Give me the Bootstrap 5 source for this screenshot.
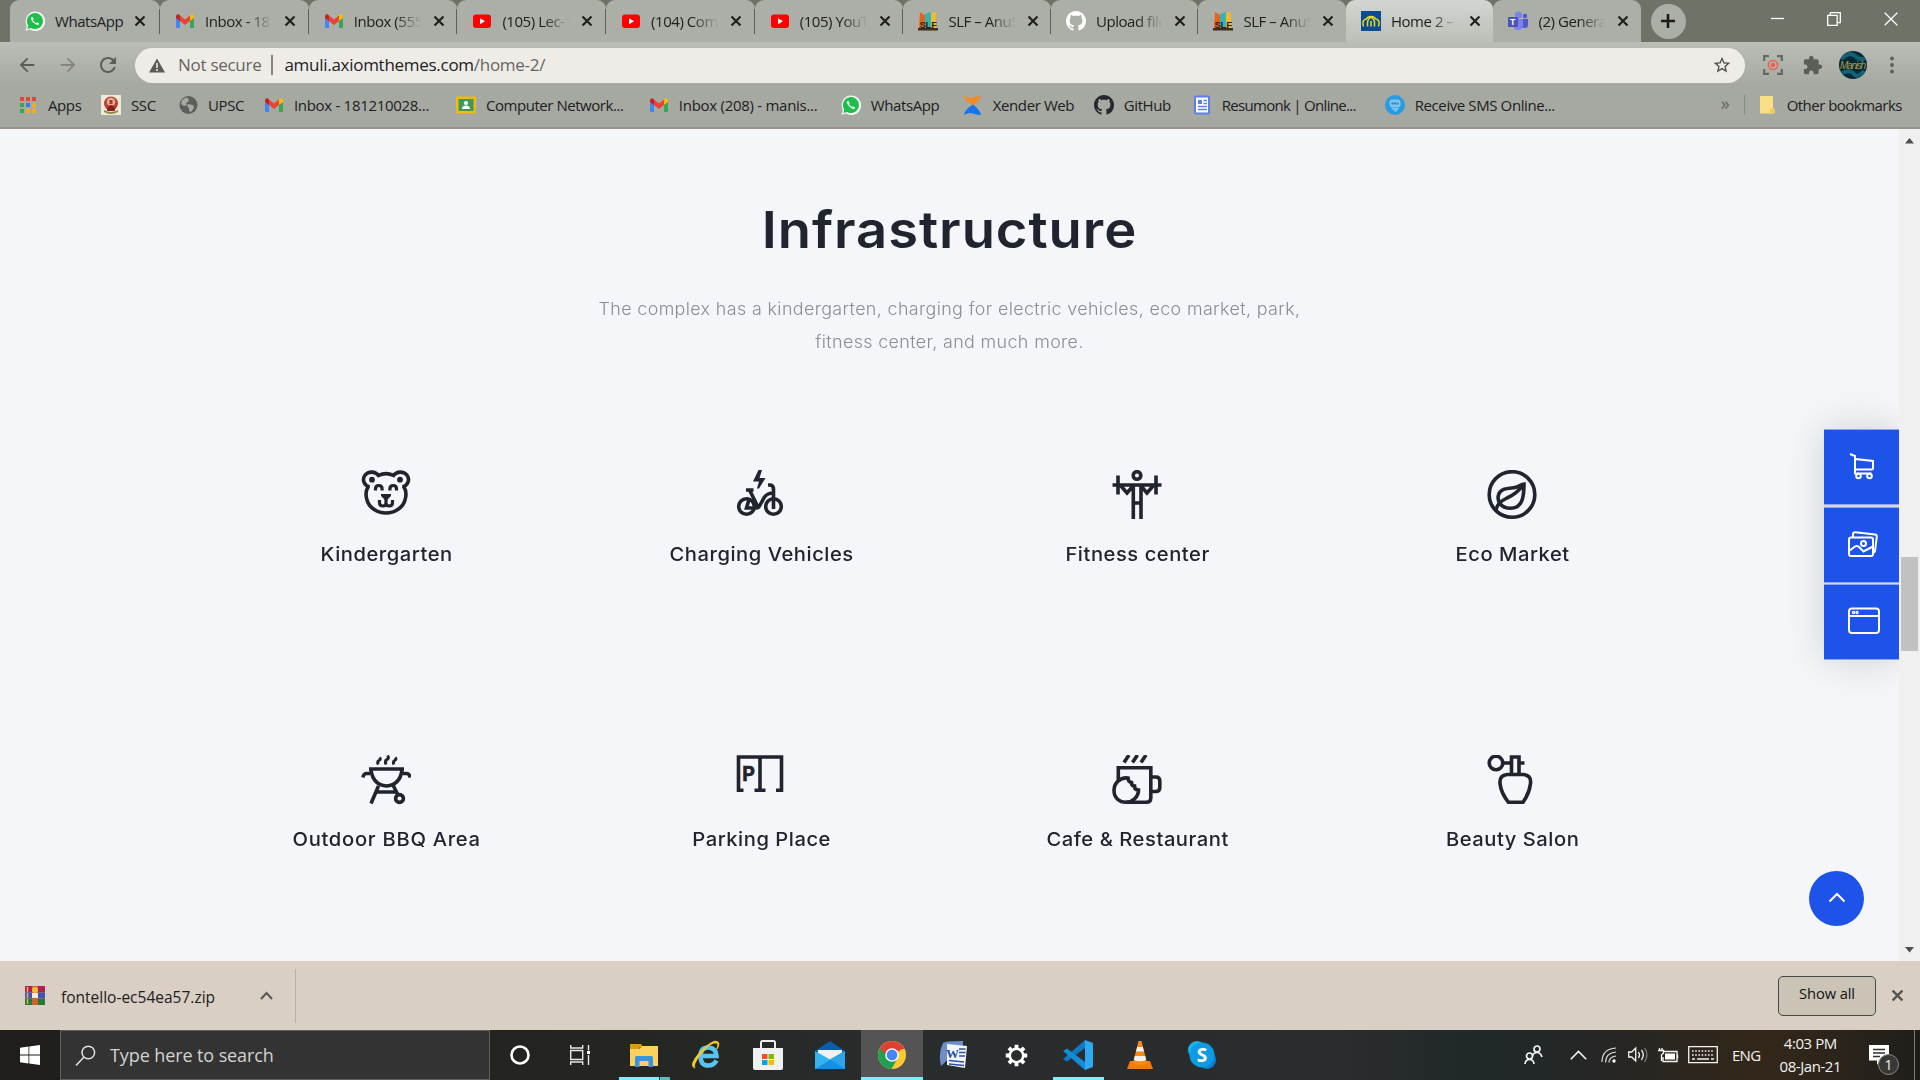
<!DOCTYPE html>
<html lang="en">
<head>
<meta charset="utf-8">
<meta name="viewport" content="width=device-width, initial-scale=1">
<title>Home 2 – Amuli</title>
<link href="https://cdn.jsdelivr.net/npm/bootstrap@5.3.0/dist/css/bootstrap.min.css" rel="stylesheet">
<style>
  html, body { height: 100%; overflow: hidden; }
  body { width: 1920px; height: 1080px; font-family: "Open Sans", "Noto Sans", sans-serif; color: #20211f; background: #f5f6fa; }
  svg { display: block; flex: none; }
  .nowrap { white-space: nowrap; }

  /* tab strip */
  .tabstrip { height: 42px; background: #6e7367; padding-left: 10px; }
  .tab-item { width: 148.7px; height: 42px; padding: 0 12px 0 15px; background: #acaea8; border-radius: 9px 9px 0 0; position: relative; font-size: 15px; letter-spacing: -.45px; }
  .tab-item:first-child { width: 150px; }
  .tab-item:nth-child(n+7) { width: 147.5px; }
  .tab-item + .tab-item::before { content: ""; position: absolute; left: -1px; top: 9px; width: 1px; height: 25px; background: #5c6057; }
  .tab-item.current { background: linear-gradient(#d3d6d1, #bcbfb8); z-index: 1; }
  .tab-item.current::before, .tab-item.current + .tab-item::before { display: none; }
  .tab-name { width: 69px; margin-left: 10px; overflow: hidden; white-space: nowrap; }
  .tab-name.faded { -webkit-mask-image: linear-gradient(90deg, #000 60%, transparent 98%); mask-image: linear-gradient(90deg, #000 60%, transparent 98%); }
  .tab-x { margin-left: 10px; }
  .new-tab { width: 35px; height: 35px; margin-left: 10px; background: #acaea8; border-radius: 50%; }
  .win-btns { margin-left: auto; padding-right: 22px; gap: 43px; }

  /* toolbar */
  .toolbar { height: 43px; background: linear-gradient(#bbbeb7, #a6a8a2); padding: 3px 0 0 16px; }
  .omnibox { height: 35px; width: 1610px; border-radius: 18px; background: #efece8; padding: 0 13px 0 14px; font-size: 17px; letter-spacing: -.28px; }
  .omnibox .sep { width: 2px; height: 20px; background: #85837f; margin: 0 11px 0 10px; }
  .muted { color: #65655f; }
  .avatar { width: 28px; height: 28px; border-radius: 50%; }

  /* bookmarks */
  .bookmarks { height: 44px; background: #a6a8a2; border-bottom: 2px solid #9b918b; padding: 0 18px 2px 18px; font-size: 15px; letter-spacing: -.4px; }
  .bm { gap: 10px; white-space: nowrap; }
  .bm:nth-child(1) { width: 83px } .bm:nth-child(2) { width: 77px } .bm:nth-child(3) { width: 86px }
  .bm:nth-child(4) { width: 192px; letter-spacing: -.3px } .bm:nth-child(5) { width: 193px; letter-spacing: -.45px } .bm:nth-child(6) { width: 192px; letter-spacing: -.28px }
  .bm:nth-child(7) { width: 122px } .bm:nth-child(8) { width: 131px } .bm:nth-child(9) { width: 98px }
  .bm:nth-child(10) { width: 193px; letter-spacing: -.7px } .bm:nth-child(11) { width: 336px }

  /* page */
  .viewport { height: 832px; background: #f5f6fa; }
  .page-area { width: 1899px; position: relative; font-family: Inter, "Open Sans", sans-serif; color: #20242e; overflow: hidden; }
  .page-title { font-size: 51px; font-weight: 600; line-height: 60px; padding-top: 71px; margin: 0; letter-spacing: .9px; transform: scaleX(1.065); }
  .intro { font-size: 17px; line-height: 33px; color: #8a8d97; font-weight: 300; margin: 33px 0 0; letter-spacing: .35px; transform: scaleX(1.052); }
  .features { width: 1501px; margin: 111px auto 0; }
  .feature { height: 285px; }
  .feature svg { margin: 0 auto 21px; fill: none; stroke: #20242e; stroke-width: 3.6; position: relative; left: -.5px; }
  .feature h6 { font-size: 19px; line-height: 27px; font-weight: 500; margin: 0; letter-spacing: .5px; transform: scaleX(1.062); }
  .side-tools { position: absolute; right: 0; top: 300px; width: 75px; box-shadow: 0 0 40px rgba(0,0,0,.16); background: #d3d8e8; }
  .side-tools a { height: 76px; background: #1e53ea; border-top: 1px solid #8fa6ee; border-bottom: 1px solid #8fa6ee; }
  .side-tools a + a { margin-top: 1.5px; }
  .side-tools svg, .to-top svg { fill: none; stroke: #fff; stroke-width: 2; margin-top: -2px; }
  .to-top { position: absolute; left: 1809px; top: 742px; width: 55px; height: 55px; border-radius: 50%; background: #1e53ea; }
  .scrollbar-v { width: 21px; background: #f0f0f0; padding: 9px 2px 8px; }
  .thumb { width: 17px; height: 94px; background: #c1c1c1; margin-top: 413px; }

  /* downloads */
  .downloads { height: 69px; background: #dacfc5; padding: 0 16px 0 25px; font-size: 15.5px; }
  .dl-item { width: 271px; height: 54px; border-right: 1px solid #b9afa6; }
  .show-all { width: 98px; height: 40px; border: 1px solid #45484a; border-radius: 5px; background: #ccc3b7; font-size: 14.7px; color: #111; letter-spacing: -.1px; }

  /* taskbar */
  .taskbar { height: 50px; background: linear-gradient(90deg, #1f1e1b 0, #242521 31%, #292c2c 46%, #2a2c2d 70%, #20282a 77%, #262624 84%, #332719 92%, #2a241c 96%, #201d19); color: #f2f2f2; }
  .search { width: 430px; margin-right: -1px; border: 1px solid #5f5f5f; background: #333; color: #d2d2d2; font-size: 18px; letter-spacing: -.1px; padding-left: 14px; }
  .task { width: 62px; height: 50px; position: relative; }
  .task.open::after { content: ""; position: absolute; left: 6px; right: 5px; bottom: 0; height: 3px; background: #76f3fa; }
  .task.stacked::after { background: linear-gradient(90deg, #76f3fa 40px, #2c4444 40px, #2c4444 41px, #5fb9bd 41px); }
  .task.focus-app { background: #545454; }
  .task.focus-app::after { left: 0; right: 0; }
  .clock { font-size: 15px; line-height: 23px; width: 80px; letter-spacing: -.45px; }
  .notice { position: relative; }
  .notice b { position: absolute; left: 9px; top: 9px; width: 21px; height: 21px; border: 1px solid #8b8b8b; border-radius: 50%; background: #3a3835; font-weight: 400; font-size: 14px; line-height: 19px; text-align: center; }
</style>
<script src="https://cdn.jsdelivr.net/npm/bootstrap@5.3.0/dist/js/bootstrap.bundle.min.js"></script>
</head>
<body class="d-flex flex-column">

<svg width="0" height="0" class="position-absolute">
  <symbol id="wa" viewBox="0 0 20 20"><path d="M.4 19.8 1.8 15A9.8 9.8 0 1 1 5.2 18.600z" fill="#f4f4f2"/><path d="M2.300 18 3.300 14.500A8 8 0 1 1 6 17z" fill="#1dbf4b"/><path transform="translate(5.200 5.200) scale(.6)" fill="#fff" d="M3.654 1.328a.678.678 0 0 0-1.015-.063L1.605 2.300c-.483.484-.661 1.169-.45 1.770a17.568 17.568 0 0 0 4.168 6.608 17.569 17.569 0 0 0 6.608 4.168c.601.211 1.286.033 1.770-.45l1.034-1.034a.678.678 0 0 0-.063-1.015l-2.307-1.794a.678.678 0 0 0-.58-.122l-2.190.547a1.745 1.745 0 0 1-1.657-.459L5.482 8.062a1.745 1.745 0 0 1-.46-1.657l.548-2.190a.678.678 0 0 0-.122-.58z"/></symbol>
  <symbol id="gm" viewBox="0 0 20 20"><path d="M1 5v11q0 1 1 1h3V8z" fill="#4285f4"/><path d="M19 5v11q0 1-1 1h-3V8z" fill="#34a853"/><path d="M5 4.500 10 8.500 15 4.500V10l-5 4-5-4z" fill="#ea4335"/><path d="M1 6c0-3 2.500-3.500 4-1.500V10L1 7z" fill="#c5221f"/><path d="M19 6c0-3-2.500-3.500-4-1.500V10l4-3z" fill="#fbbc04"/></symbol>
  <symbol id="yt" viewBox="0 0 20 20"><rect x="1" y="3.500" width="18" height="13.500" rx="3" fill="#f00"/><path d="M8 7.300v6l5-3z" fill="#fff"/></symbol>
  <symbol id="slf" viewBox="0 0 20 20"><path d="M2 1l5 3v13H1z" fill="#e8641b"/><path d="M7 3l6-2v16H7z" fill="#35b3b6"/><path d="M13 2l5-1v16h-5z" fill="#f1b92c"/><path d="M0 17h20v2.500H0z" fill="#3c2c22"/><text x="1.500" y="17" font-family="Liberation Sans" font-weight="700" font-size="9.500" textLength="17" fill="#2b2118">SLF</text></symbol>
  <symbol id="gh" viewBox="0 0 16 16"><path d="M8 0C3.580 0 0 3.580 0 8c0 3.540 2.290 6.530 5.470 7.590.4.070.55-.17.55-.38 0-.19-.01-.82-.01-1.490-2.010.37-2.530-.49-2.690-.94-.09-.23-.48-.94-.82-1.130-.28-.15-.68-.52-.01-.53.63-.01 1.080.58 1.230.82.72 1.210 1.870.87 2.330.66.070-.52.28-.87.51-1.070-1.780-.2-3.640-.89-3.640-3.950 0-.87.31-1.590.82-2.150-.08-.2-.36-1.020.08-2.120 0 0 .67-.21 2.200.82.64-.18 1.320-.27 2-.27s1.360.09 2 .27c1.530-1.040 2.200-.82 2.200-.82.44 1.100.16 1.920.08 2.120.51.56.82 1.270.82 2.150 0 3.070-1.870 3.750-3.650 3.950.29.25.54.73.54 1.480 0 1.070-.01 1.930-.01 2.200 0 .21.15.46.55.38A8.010 8.010 0 0 0 16 8c0-4.420-3.580-8-8-8z"/></symbol>
  <symbol id="cross" viewBox="0 0 12 12"><path d="M1.500 1.500l9 9m0-9l-9 9" stroke="currentColor" stroke-width="2.200" fill="none"/></symbol>
  <symbol id="arrow" viewBox="0 0 24 24"><path d="M20 11H7.830l5.590-5.590L12 4l-8 8 8 8 1.410-1.410L7.830 13H20v-2z"/></symbol>
</svg>

<!-- browser tabs -->
<div class="tabstrip d-flex align-items-center">
  <div class="tab-item d-flex align-items-center"><svg width="20" height="20"><use href="#wa"/></svg><span class="tab-name">WhatsApp</span><svg class="tab-x" width="12" height="12"><use href="#cross"/></svg></div>
  <div class="tab-item d-flex align-items-center"><svg width="20" height="20"><use href="#gm"/></svg><span class="tab-name faded">Inbox - 18</span><svg class="tab-x" width="12" height="12"><use href="#cross"/></svg></div>
  <div class="tab-item d-flex align-items-center"><svg width="20" height="20"><use href="#gm"/></svg><span class="tab-name faded">Inbox (555</span><svg class="tab-x" width="12" height="12"><use href="#cross"/></svg></div>
  <div class="tab-item d-flex align-items-center"><svg width="20" height="20"><use href="#yt"/></svg><span class="tab-name faded">(105) Lec-1</span><svg class="tab-x" width="12" height="12"><use href="#cross"/></svg></div>
  <div class="tab-item d-flex align-items-center"><svg width="20" height="20"><use href="#yt"/></svg><span class="tab-name faded">(104) Com</span><svg class="tab-x" width="12" height="12"><use href="#cross"/></svg></div>
  <div class="tab-item d-flex align-items-center"><svg width="20" height="20"><use href="#yt"/></svg><span class="tab-name faded">(105) YouT</span><svg class="tab-x" width="12" height="12"><use href="#cross"/></svg></div>
  <div class="tab-item d-flex align-items-center"><svg width="20" height="20"><use href="#slf"/></svg><span class="tab-name faded">SLF – AnuS</span><svg class="tab-x" width="12" height="12"><use href="#cross"/></svg></div>
  <div class="tab-item d-flex align-items-center"><svg width="20" height="20" fill="#fff"><use href="#gh"/></svg><span class="tab-name faded">Upload file</span><svg class="tab-x" width="12" height="12"><use href="#cross"/></svg></div>
  <div class="tab-item d-flex align-items-center"><svg width="20" height="20"><use href="#slf"/></svg><span class="tab-name faded">SLF – AnuS</span><svg class="tab-x" width="12" height="12"><use href="#cross"/></svg></div>
  <div class="tab-item current d-flex align-items-center"><svg width="20" height="20" viewBox="0 0 20 20"><path d="M0 0h20v20H0z" fill="#0c4a92"/><path d="M2.500 15.500q-1-2-.5-4.500 1-3 3.500-3 1-2.500 4.500-2.500T14.500 8q2.500 0 3.500 3 .5 2.500-.5 4.500M6.500 15.500v-4q0-3 3.500-5.500 3.500 2.500 3.500 5.500v4M10 15.500V10" fill="none" stroke="#e8dc20" stroke-width="1.500"/></svg><span class="tab-name faded">Home 2 –</span><svg class="tab-x" width="12" height="12"><use href="#cross"/></svg></div>
  <div class="tab-item d-flex align-items-center"><svg width="20" height="20" viewBox="0 0 20 20"><circle cx="10.500" cy="4" r="3.500" fill="#7b83eb"/><circle cx="17" cy="5" r="2.200" fill="#5059c9"/><path d="M14 8h6v6q0 3-3 3t-3-2z" fill="#5059c9"/><path d="M5 8h10v6q0 5-5 5t-5-5z" fill="#7b83eb"/><rect y="6" width="10" height="10" rx="1" fill="#4b53bc"/><text x="2" y="14.300" font-size="9" font-weight="700" font-family="Liberation Sans" fill="#fff">T</text></svg><span class="tab-name faded">(2) Genera</span><svg class="tab-x" width="12" height="12"><use href="#cross"/></svg></div>
  <div class="new-tab d-flex align-items-center justify-content-center"><svg width="16" height="16" viewBox="0 0 16 16"><path d="M8 1v14M1 8h14" stroke="#1c1d1b" stroke-width="2.600"/></svg></div>
  <div class="win-btns d-flex align-items-center pb-1">
    <svg width="13" height="14" viewBox="0 0 13 14"><path d="M0 6.500h13" stroke="#fff" stroke-width="1.300"/></svg>
    <svg width="14" height="14" viewBox="0 0 14 14" fill="none" stroke="#fff" stroke-width="1.300"><path d="M.7 3.300h9.500v10H.7zM3.300 3V.7h10v10h-3"/></svg>
    <svg width="14" height="14" viewBox="0 0 14 14"><path d="M.7.7l12.600 12.600m0-12.600L.7 13.300" stroke="#fff" stroke-width="1.300"/></svg>
  </div>
</div>

<!-- address bar -->
<div class="toolbar d-flex align-items-center">
  <svg width="22" height="22" fill="#5b5d59"><use href="#arrow"/></svg>
  <svg width="22" height="22" fill="#84867f" style="transform:scaleX(-1);margin-left:19px"><use href="#arrow"/></svg>
  <svg style="margin-left:17px" width="24" height="24" viewBox="0 0 24 24" fill="#5b5d59"><path d="M17.650 6.350C16.200 4.900 14.210 4 12 4c-4.420 0-7.990 3.580-7.990 8s3.570 8 7.990 8c3.730 0 6.840-2.550 7.730-6h-2.080c-.82 2.330-3.040 4-5.650 4-3.310 0-6-2.690-6-6s2.690-6 6-6c1.660 0 3.140.69 4.220 1.780L13 11h7V4l-2.350 2.350z"/></svg>
  <div class="omnibox d-flex align-items-center ms-auto">
    <svg width="16" height="15" viewBox="0 0 16 15"><path d="M8 .5 16 14.500H0z" fill="#5b5b57"/><path d="M8 5v5m0 1v2" stroke="#efece8" stroke-width="1.600"/></svg>
    <span class="muted nowrap" style="margin-left:13px">Not secure</span>
    <span class="sep"></span>
    <span class="nowrap">amuli.axiomthemes.com<span class="muted">/home-2/</span></span>
    <svg class="ms-auto" width="20" height="20" viewBox="0 0 24 24" fill="#4f504d"><path d="M22 9.240l-7.190-.62L12 2 9.190 8.630 2 9.240l5.460 4.730L5.820 21 12 17.270 18.180 21l-1.630-7.030L22 9.240zM12 15.400l-3.760 2.270 1-4.280-3.320-2.880 4.380-.38L12 6.100l1.710 4.040 4.380.38-3.320 2.880 1 4.280L12 15.400z"/></svg>
  </div>
  <div class="d-flex align-items-center" style="width:175px;padding-left:18px">
    <svg width="20" height="20" viewBox="0 0 20 20" fill="none"><path d="M1.200 6V1.200H6m8 0h4.800V6m0 8v4.800H14m-8 0H1.200V14" stroke="#656763" stroke-width="2.200"/><circle cx="10" cy="10" r="4.600" stroke="#ef5f50" stroke-width="1.500"/><circle cx="10" cy="10" r="2.300" fill="#ef5f50"/></svg>
    <svg style="margin-left:20px" width="20" height="20" viewBox="1 0 23 23" fill="#5b5d59"><path d="M20.500 11H19V7c0-1.100-.9-2-2-2h-4V3.500C13 2.120 11.880 1 10.500 1S8 2.120 8 3.500V5H4c-1.100 0-1.990.9-1.990 2v3.800H3.500c1.490 0 2.700 1.210 2.700 2.700s-1.210 2.700-2.700 2.700H2V20c0 1.100.9 2 2 2h3.800v-1.500c0-1.490 1.210-2.700 2.700-2.700 1.490 0 2.700 1.210 2.700 2.700V22H17c1.100 0 2-.9 2-2v-4h1.500c1.380 0 2.500-1.120 2.500-2.500S21.880 11 20.500 11z"/></svg>
    <svg class="avatar" style="margin-left:16px" viewBox="0 0 28 28"><path d="M0 0h28v28H0z" fill="#052a35"/><path d="M2 8q8-8 14-3t10 2M3 22q8-4 12 1t10-3" stroke="#126272" stroke-width="4" fill="none"/><text x="1" y="17.500" font-size="10" font-style="italic" textLength="26" font-family="Liberation Sans" fill="#a99a4e">Manish</text></svg>
    <svg style="margin-left:23px" width="4" height="18" viewBox="0 0 4 18" fill="#5b5d59"><circle cx="2" cy="2.500" r="1.900"/><circle cx="2" cy="9" r="1.900"/><circle cx="2" cy="15.500" r="1.900"/></svg>
  </div>
</div>

<!-- bookmarks -->
<div class="bookmarks d-flex align-items-center">
  <div class="bm d-flex align-items-center"><svg width="20" height="20" viewBox="0 0 20 20"><path d="M2 2h4v4H2zM8 2h4v4H8zM14 2h4v4h-4z" fill="#ea4335"/><path d="M2 8h4v4H2zM2 14h4v4H2z" fill="#34a853"/><path d="M8 8h4v4H8z" fill="#2f7de9"/><path d="M14 8h4v4h-4zM8 14h4v4H8zM14 14h4v4h-4z" fill="#f5ab1c"/></svg><span>Apps</span></div>
  <div class="bm d-flex align-items-center"><svg width="20" height="20" viewBox="0 0 20 20"><path d="M0 0h20v20H0z" fill="#f0e9dc"/><circle cx="10" cy="8.500" r="7" fill="#b9443c"/><circle cx="10" cy="7" r="4.200" fill="#e2b08a"/><path d="M6 16q0-6 4-6t4 6z" fill="#8a1f1b"/><path d="M8.500 5h3v4h-3z" fill="#a83a2c"/><path d="M3 15q7 4 14 0v2q-7 4-14 0z" fill="#8c8a4c"/></svg><span>SSC</span></div>
  <div class="bm d-flex align-items-center"><svg width="20" height="20" viewBox="0 0 20 20"><circle cx="10.500" cy="10" r="9" fill="#5d5f5c"/><path d="M4 5q4-3 6-2l1 3-3 2 1 2-3 1-3-2zM10 9l5 1 1 3-3 4-2-1v-3l-2-2z" fill="#a6a8a2"/></svg><span>UPSC</span></div>
  <div class="bm d-flex align-items-center"><svg width="20" height="20"><use href="#gm"/></svg><span>Inbox - 181210028...</span></div>
  <div class="bm d-flex align-items-center"><svg width="20" height="20" viewBox="0 0 20 20"><path d="M0 1.500h20v17H0z" fill="#f2b90f"/><path d="M2.500 4h15v12h-15z" fill="#3f9a58"/><circle cx="10" cy="8" r="2" fill="#fff"/><path d="M6 14q0-3.500 4-3.500t4 3.500z" fill="#fff"/></svg><span>Computer Network...</span></div>
  <div class="bm d-flex align-items-center"><svg width="20" height="20"><use href="#gm"/></svg><span>Inbox (208) - manis...</span></div>
  <div class="bm d-flex align-items-center"><svg width="20" height="20"><use href="#wa"/></svg><span>WhatsApp</span></div>
  <div class="bm d-flex align-items-center"><svg width="20" height="20" viewBox="0 0 20 20"><path d="M1 0q5 4 9 2.500T18 1q-1 4-8 9.500Q2 6 1 0z" fill="#f58a1f"/><path d="M1 20q5-3 9-1.500t8 1.500q-1-5-8-10.500Q2 14 1 20z" fill="#1673ea"/></svg><span>Xender Web</span></div>
  <div class="bm d-flex align-items-center"><svg width="20" height="20" fill="#24292e"><use href="#gh"/></svg><span>GitHub</span></div>
  <div class="bm d-flex align-items-center"><svg width="20" height="20" viewBox="0 0 20 20"><rect x="3" y="1.500" width="14" height="17" rx="1" fill="#fff" stroke="#5c7fee" stroke-width="2"/><path d="M6 5h4v4H6z" fill="#5c7fee"/><path d="M11.500 5.500H15M11.500 8.500H15M6 11.500h9M6 14.500h9" stroke="#5c7fee" stroke-width="1.400"/></svg><span>Resumonk | Online...</span></div>
  <div class="bm d-flex align-items-center"><svg width="20" height="20" viewBox="0 0 20 20"><circle cx="10" cy="10" r="10" fill="#2b9be0"/><rect x="4.500" y="4.500" width="11" height="8" rx="3" fill="#7ec4f0"/><path d="M6 13h8l-3 4z" fill="#7ec4f0"/><path d="M6.500 8.500h7" stroke="#2b7fc0" stroke-width="2" stroke-dasharray="2 .6"/></svg><span>Receive SMS Online...</span></div>
  <span class="muted" style="width:23px;font-size:18px;line-height:18px;padding-bottom:5px">»</span>
  <span style="width:1px;height:20px;background:#8a8c87;margin-right:14px"></span>
  <svg width="17" height="20" viewBox="0 0 17 20"><path d="M1 1h13v12l1.500 1v4.500H1z" fill="#fbdf85"/><path d="M11 18.500v-5h3l1.500 1v4z" fill="#f1c95c"/></svg>
  <span class="nowrap" style="margin-left:11px;letter-spacing:-.52px">Other bookmarks</span>
</div>

<!-- page -->
<main class="viewport d-flex">
  <section class="page-area text-center">
    <h1 class="page-title">Infrastructure</h1>
    <p class="intro">The complex has a kindergarten, charging for electric vehicles, eco market, park,<br>fitness center, and much more.</p>
    <div class="features row g-0">
      <div class="feature col-3"><svg width="50" height="50" viewBox="0 0 50 50"><path d="M8.500 17C3 15.500 .8 9.500 4 5.200 7.500.8 14.500 1.200 17.500 5.500 22 3.200 28 3.200 32.500 5.500 35.500 1.200 42.500.8 46 5.200 49.200 9.500 47 15.500 41.500 17"/><path d="M7.500 16C5 20 4.500 25.500 6 30 8 37.500 16 43 25 43S42 37.500 44 30C45.500 25.500 45 20 42.500 16"/><path d="M14.500 20.500v-1.500q0-3.500 3.300-3.500t3.300 3.500v1.500M28.900 20.500v-1.500q0-3.500 3.300-3.500t3.300 3.500v1.500M18.500 30v2.500q0 3.500 3.300 3.500 3.200 0 3.200-3 0 3 3.200 3 3.300 0 3.300-3.500V30M25 27v7" stroke-width="3.200"/><path d="M20 24h10v2l-4 4h-2l-4-4z" fill="#20242e" stroke="none"/><circle cx="11" cy="9.700" r="2.900" fill="#20242e" stroke="none"/><circle cx="39" cy="9.700" r="2.900" fill="#20242e" stroke="none"/></svg><h6>Kindergarten</h6></div>
      <div class="feature col-3"><svg width="50" height="50" viewBox="1 0 50 50"><path d="M23.500 0H27l-2.500 8h6L24 18.500h-2l2-7h-6z" fill="#20242e" stroke="none"/><circle cx="11.500" cy="36.500" r="7.800"/><circle cx="38.500" cy="36.500" r="7.800"/><path d="M11 20h7.500M14.500 20l9 18M14.500 28l-3 10h10q2 0 3-2l5-9q3-4 9-4M33 15h1.500q4 0 4 4v20"/></svg><h6>Charging Vehicles</h6></div>
      <div class="feature col-3"><svg width="50" height="50" viewBox="0 0 50 50"><circle cx="25" cy="5.500" r="3.800"/><path d="M.5 15h49M6 5.500v19M44 5.500v19M21.300 15v34M29 15v34M21 33h8M9 16l6 7 6-7M29 16l6 7 6-7"/></svg><h6>Fitness center</h6></div>
      <div class="feature col-3"><svg width="50" height="50" viewBox="0 0 50 50"><circle cx="25" cy="24.500" r="22.800"/><path d="M37 14C37 28 35 38.300 23 38.300 15 38.300 9.500 32 11.500 25 13.500 17.500 23 18.500 28 17.500 33 16.500 34 14 37 14zM9 41C9.500 34 14 31 20 28 27 25 32 21 37 14"/></svg><h6>Eco Market</h6></div>
      <div class="feature col-3"><svg width="50" height="50" viewBox="0 0 50 50"><path d="M8 14h35M10 15q2 15 15.500 16Q39 30 41 15M9 18.500H6.500Q2.500 18 2 22.500M42 18.500h2.500q4-.5 4.500 4M17.500 31 10 48.500M32.500 31l4 8M15 37h20"/><circle cx="38.500" cy="43.500" r="3.900"/><path d="M17.300 9.500q-1.500-3 .7-4t.5-3M25 9.500q-1.500-4 1-5T26.500.5M33 9.500q-1.500-3 .7-4t.5-3" stroke-width="3"/></svg><h6 style="letter-spacing:.67px">Outdoor BBQ Area</h6></div>
      <div class="feature col-3"><svg width="50" height="50" viewBox="1 0 50 50"><path d="M8.500 35.200h-5V2h43v33.200h-5.500M25 2v33M19.500 35.200h11"/><text x="7.200" y="25.600" font-size="19.500" font-weight="700" font-family="Inter" fill="#20242e" stroke="#20242e" stroke-width=".6">P</text></svg><h6>Parking Place</h6></div>
      <div class="feature col-3"><svg width="50" height="50" viewBox="0 0 50 50"><path d="M12 7.500 17 0M20.500 7.500l5-7.500M29 7.500 34 0" /><path d="M6.300 26V12.800h32.500v30q0 4.500-4.500 4.500H14M38.800 22h5q4 0 4 4v6.500q0 4-4 4h-5"/><path d="M16 23C8 22 2 28 2 35.500S7.500 47.300 14 47.300 26.500 42 26.500 35q-4 0-4-4-3 0-3-3.500Q16 27 16 23z"/></svg><h6>Cafe &amp; Restaurant</h6></div>
      <div class="feature col-3"><svg width="50" height="50" viewBox="0 0 50 50"><circle cx="9" cy="8" r="6.800"/><path d="M16 8h8M33 8h4.500M24.500 19V2h7.500v17M20 19.500h16.500q8 1 7 9Q42.500 38 36 47.300H21.500Q14 38 13 28.500q-.8-8 7-9z"/></svg><h6>Beauty Salon</h6></div>
    </div>

    <nav class="side-tools">
      <a class="d-flex align-items-center justify-content-center"><svg width="28" height="28" viewBox="0 0 28 28"><path d="M2 2l5 2v17.500h16.500M7 7l18 2v7q0 1.500-1.500 1.500H7"/><circle cx="10.500" cy="24" r="2.300"/><circle cx="21.500" cy="24" r="2.300"/></svg></a>
      <a class="d-flex align-items-center justify-content-center"><svg width="32" height="28" viewBox="0 0 32 28" style="margin-left:2px"><rect x="2" y="7.500" width="24" height="18.500" rx="2"/><path d="M6 7V4q.3-2 2.500-1.800L28 4.500q2 .3 1.800 2.200L28 21q-.3 1.700-2 1.600M2 21l6-4.500q2-1.200 4 .5l4.500 4.500L26 16.500"/><circle cx="16.500" cy="13.500" r="2.500"/></svg></a>
      <a class="d-flex align-items-center justify-content-center"><svg width="34" height="28" viewBox="0 0 34 28" style="margin-left:5px"><rect x="2" y="1.500" width="30" height="24.500" rx="3"/><path d="M2 9h30"/><circle cx="6.500" cy="5.500" r="1.100" stroke-width="1.300"/><circle cx="10" cy="5.500" r="1.100" stroke-width="1.300"/></svg></a>
    </nav>
    <a class="to-top d-flex align-items-center justify-content-center"><svg width="18" height="12" viewBox="0 0 18 12"><path d="M1.500 9.500 9 2l7.500 7.500"/></svg></a>
  </section>
  <aside class="scrollbar-v d-flex flex-column align-items-center">
    <svg width="9" height="6" viewBox="0 0 9 6"><path d="M4.500 0 9 5.500H0z" fill="#4e4e4e"/></svg>
    <div class="thumb"></div>
    <svg class="mt-auto" width="9" height="6" viewBox="0 0 9 6"><path d="M4.500 5.500 9 0H0z" fill="#4e4e4e"/></svg>
  </aside>
</main>

<!-- downloads bar -->
<div class="downloads d-flex align-items-center">
  <div class="dl-item d-flex align-items-center">
    <svg width="20" height="19" viewBox="0 0 20 19"><path d="M0 0h20v6.300H0z" fill="#b51d52"/><path d="M0 6.300h20v6.300H0z" fill="#4a4fb0"/><path d="M0 12.600h20V19H0z" fill="#24783c"/><path d="M2.500 1v5M2.500 7v5M2.500 13v5" stroke="#e8b53c" stroke-width="1.500"/><path d="M7 0h6v19H7z" fill="#c9642a"/><path d="M7 7h6v5H7z" fill="#f3e9da"/><circle cx="10" cy="4" r="3" fill="#f0bf3a"/></svg>
    <span class="nowrap pt-1" style="margin-left:16px">fontello-ec54ea57.zip</span>
    <svg class="ms-auto" style="margin-right:22px" width="13" height="9" viewBox="0 0 13 9"><path d="M1 8l5.500-6L12 8" fill="none" stroke="#565552" stroke-width="2"/></svg>
  </div>
  <button class="show-all ms-auto p-0 pb-1 nowrap">Show all</button>
  <svg style="margin-left:15px;color:#55544f" width="13" height="13"><use href="#cross"/></svg>
</div>

<!-- taskbar -->
<footer class="taskbar d-flex align-items-stretch">
  <div class="d-flex align-items-center justify-content-center" style="width:60px"><svg width="20" height="20" viewBox="0 0 20 20" fill="#fff"><path d="M0 2.800 8.500 1.600v8H0zM9.300 1.500 20 0v9.600H9.300zM0 10.400h8.500v8L0 17.200zM9.300 10.400H20V20L9.300 18.500z"/></svg></div>
  <div class="search d-flex align-items-center"><svg width="21" height="21" viewBox="0 0 21 21" fill="none" stroke="#e2e2e2" stroke-width="1.500"><circle cx="13.300" cy="7.500" r="6.300"/><path d="M9 12 1 20.500"/></svg><span class="nowrap" style="margin-left:14px">Type here to search</span></div>
  <div class="task d-flex align-items-center justify-content-center"><svg width="20" height="20" viewBox="0 0 20 20"><circle cx="10" cy="10" r="8.500" fill="none" stroke="#fff" stroke-width="2.600"/></svg></div>
  <div class="task d-flex align-items-center justify-content-center"><svg style="margin-right:4px" width="20" height="20" viewBox="0 0 20 20" fill="none" stroke="#e8e8e8" stroke-width="1.400"><path d="M.7 5.500h12v9H.7zM.7 0v3h12V0M.7 20v-3h12v3M18.500 0v5.500M18.500 10v10"/><path d="M17 6h3v3h-3z" fill="#fff" stroke="none"/></svg></div>
  <div class="task open stacked d-flex align-items-center justify-content-center"><svg width="28" height="26" viewBox="0 0 28 26"><path d="M0 2h11l2 3h-3l-2 3H0z" fill="#dc9a0c"/><path d="M0 7h9l3-3h16v20H0z" fill="#fbd160"/><path d="M5 25V15.500q0-1.500 1.500-1.500h15q1.500 0 1.500 1.500V25h-4.500v-6h-9v6z" fill="#3b93d9"/></svg></div>
  <div class="task d-flex align-items-center justify-content-center"><svg width="30" height="30" viewBox="0 0 30 30"><path d="M25.500 20.500q-2.500 5-8.500 5-7.500 0-7.500-9t7.500-9q8 0 8.500 8.500H10" fill="none" stroke="#58c4f1" stroke-width="4.600"/><path d="M4 28Q-3 26 9 12 23-2 27 2q2 2-1 7 2-5 0-6Q20 1 9 15 1 26 4 28z" fill="#f5c926" stroke="#f5c926"/></svg></div>
  <div class="task d-flex align-items-center justify-content-center"><svg width="30" height="30" viewBox="0 0 30 30"><path d="M8 9V2.500Q8 1 9.500 1h11Q22 1 22 2.500V9" fill="none" stroke="#eee" stroke-width="2"/><path d="M0 8h30v20q0 2-2 2H2q-2 0-2-2z" fill="#f0f0f0"/><path d="M9 14h5.500v5H9z" fill="#f25022"/><path d="M15.500 14H21v5h-5.500z" fill="#7fba00"/><path d="M9 20h5.500v5H9z" fill="#00a4ef"/><path d="M15.500 20H21v5h-5.500z" fill="#ffb900"/></svg></div>
  <div class="task d-flex align-items-center justify-content-center"><svg width="30" height="28" viewBox="0 0 30 28"><path d="M15 0 30 10v5H0v-5z" fill="#0b5cab"/><path d="M3 9h24v10H3z" fill="#f1f1f1"/><path d="M0 10l15 8.500L30 10v18H0z" fill="#36b2f0"/><path d="M30 10v18H0z" fill="#1590de"/><path d="M15 18.500 30 10v18z" fill="#2ea5ea"/></svg></div>
  <div class="task open focus-app d-flex align-items-center justify-content-center"><svg width="28" height="28" viewBox="0 0 28 28"><circle cx="14" cy="14" r="14" fill="#fcc934"/><path d="M14 14 1.900 7A14 14 0 0 0 13.500 28l6-10.500z" fill="#1ea050"/><path d="M14 14H8L1.900 7a14 14 0 0 1 24.200 0z" fill="#de4033"/><path d="M14 7.500h12.300" stroke="#de4033"/><circle cx="14" cy="14" r="6.800" fill="#fff"/><circle cx="14" cy="14" r="5.400" fill="#4587f2"/></svg></div>
  <div class="task d-flex align-items-center justify-content-center"><svg width="30" height="28" viewBox="0 0 30 28"><path d="M4 2q2-2 20-2v4L2 25Q-1 12 4 2z" fill="#6d8fc9"/><path d="M8 3l20 2-2 22-18-3z" fill="#f3f5fa"/><path d="M20 8h6.500M20 11.500h6.500M20 15h6M10 19.500l15 1.500M10 23l15 1.500" stroke="#2c52a0" stroke-width="1.500"/><text x="7" y="17" font-family="Liberation Serif" font-weight="700" font-size="13" fill="#284f9f">W</text></svg></div>
  <div class="task d-flex align-items-center justify-content-center"><svg width="23" height="23" viewBox="0 0 24 24" fill="none" stroke="#fff"><circle cx="12" cy="12" r="7" stroke-width="2.600"/><path d="M12 5V.8M12 23.200V19M5 12H.8M23.200 12H19M7 7 4.100 4.100M19.900 19.900 17 17M7 17l-2.900 2.900M19.900 4.100 17 7" stroke-width="4"/></svg></div>
  <div class="task open d-flex align-items-center justify-content-center"><svg width="30" height="30" viewBox="0 0 30 30"><path d="M22 0v8L4 21.500 0 19z" fill="#1178c2"/><path d="M22 30v-8L4 8.500 0 11z" fill="#168bd6"/><path d="M22 0l8 3v24l-8 3z" fill="#2fa8f2"/></svg></div>
  <div class="task d-flex align-items-center justify-content-center"><svg width="26" height="28" viewBox="0 0 26 28"><path d="M3 20h20l3 8H0z" fill="#f07d0b"/><path d="M11.500 0h3L20 22q-7 4-14 0z" fill="#f58a1a"/><path d="M10.200 6h5.600l1.200 4.500H9zM7.800 15h10.400l1 4q-6.200 2.500-12.400 0z" fill="#f1f1ee"/></svg></div>
  <div class="task d-flex align-items-center justify-content-center"><svg width="28" height="28" viewBox="0 0 28 28"><circle cx="9" cy="9" r="9" fill="#1bb3ee"/><circle cx="19" cy="19" r="9" fill="#0a7fd4"/><circle cx="14" cy="14" r="12.500" fill="#0d9be3"/><text x="14" y="20.500" text-anchor="middle" font-family="Open Sans" font-weight="700" font-size="19" fill="#fff">S</text></svg></div>

  <div class="d-flex align-items-center ms-auto" style="width:396px">
    <svg width="19" height="20" viewBox="0 0 19 20" fill="none" stroke="#f2f2f2" stroke-width="1.700"><circle cx="13" cy="4" r="3"/><path d="M8.500 11q1-3.500 4.500-3.500T18 12"/><circle cx="5.500" cy="11" r="3"/><path d="M1 19q.5-4.500 4.500-4.500T10 19"/></svg>
    <svg style="margin-left:27px" width="17" height="10" viewBox="0 0 17 10" fill="none" stroke="#f2f2f2" stroke-width="1.600"><path d="M.8 9.200 8.500 1.500l7.700 7.700"/></svg>
    <svg style="margin-left:14px" width="16" height="16" viewBox="0 0 16 16" fill="none" stroke="#dcdcdc" stroke-width="1.200"><path d="M1 15Q1 2 15 1M4.500 15.500Q4.500 6 15 5M8 15.500Q8 10 15 9"/><circle cx="13" cy="14" r="1.700" fill="#fff" stroke="none"/></svg>
    <svg style="margin-left:11px" width="21" height="18" viewBox="0 0 21 18" fill="none" stroke="#f2f2f2" stroke-width="1.300"><path d="M.7 6h3l4-4v13l-4-4h-3zM10.500 6q2 3 0 6M13.500 4q3.500 4.500 0 10"/><path d="M16.500 2q5 6.500 0 14" stroke="#777"/></svg>
    <svg style="margin-left:9px" width="21" height="15" viewBox="0 0 21 15"><path d="M5 3.500h14v10H5V9M19.500 6.500v4" fill="none" stroke="#f2f2f2" stroke-width="1.400"/><path d="M7 5.500h10v6H7z" fill="#fff"/><path d="M1.500 0v2.500M4 0v2.500M0 2.500h5.500V5L3.500 7v6" fill="none" stroke="#fff" stroke-width="1.300"/></svg>
    <svg style="margin-left:9px" width="30" height="18" viewBox="0 0 30 18" fill="none" stroke="#f2f2f2" stroke-width="1.300"><path d="M.7.7h28.600v16H.7z"/><path d="M4 5h22M4 9h22" stroke-dasharray="1.600 1.600"/><path d="M4 13h3M9 13h12M23 13h3"/></svg>
    <span style="margin-left:14px;font-size:15px;letter-spacing:-.75px">ENG</span>
    <div class="clock text-center nowrap" style="margin-left:10px;padding-bottom:1px">4:03 PM<br>08-Jan-21</div>
    <div class="notice ms-auto" style="margin-right:25px"><svg width="20" height="20" viewBox="0 0 20 20"><path d="M0 0h20v15.500H11L8 20v-4.500H0z" fill="#fff"/><path d="M4 4.500h12M4 8h12M4 11.500h7" stroke="#33302c" stroke-width="1.400"/></svg><b>1</b></div>
    <span style="width:1px;height:50px;background:#7d7a75;margin-right:5px"></span>
  </div>
</footer>
</body>
</html>
